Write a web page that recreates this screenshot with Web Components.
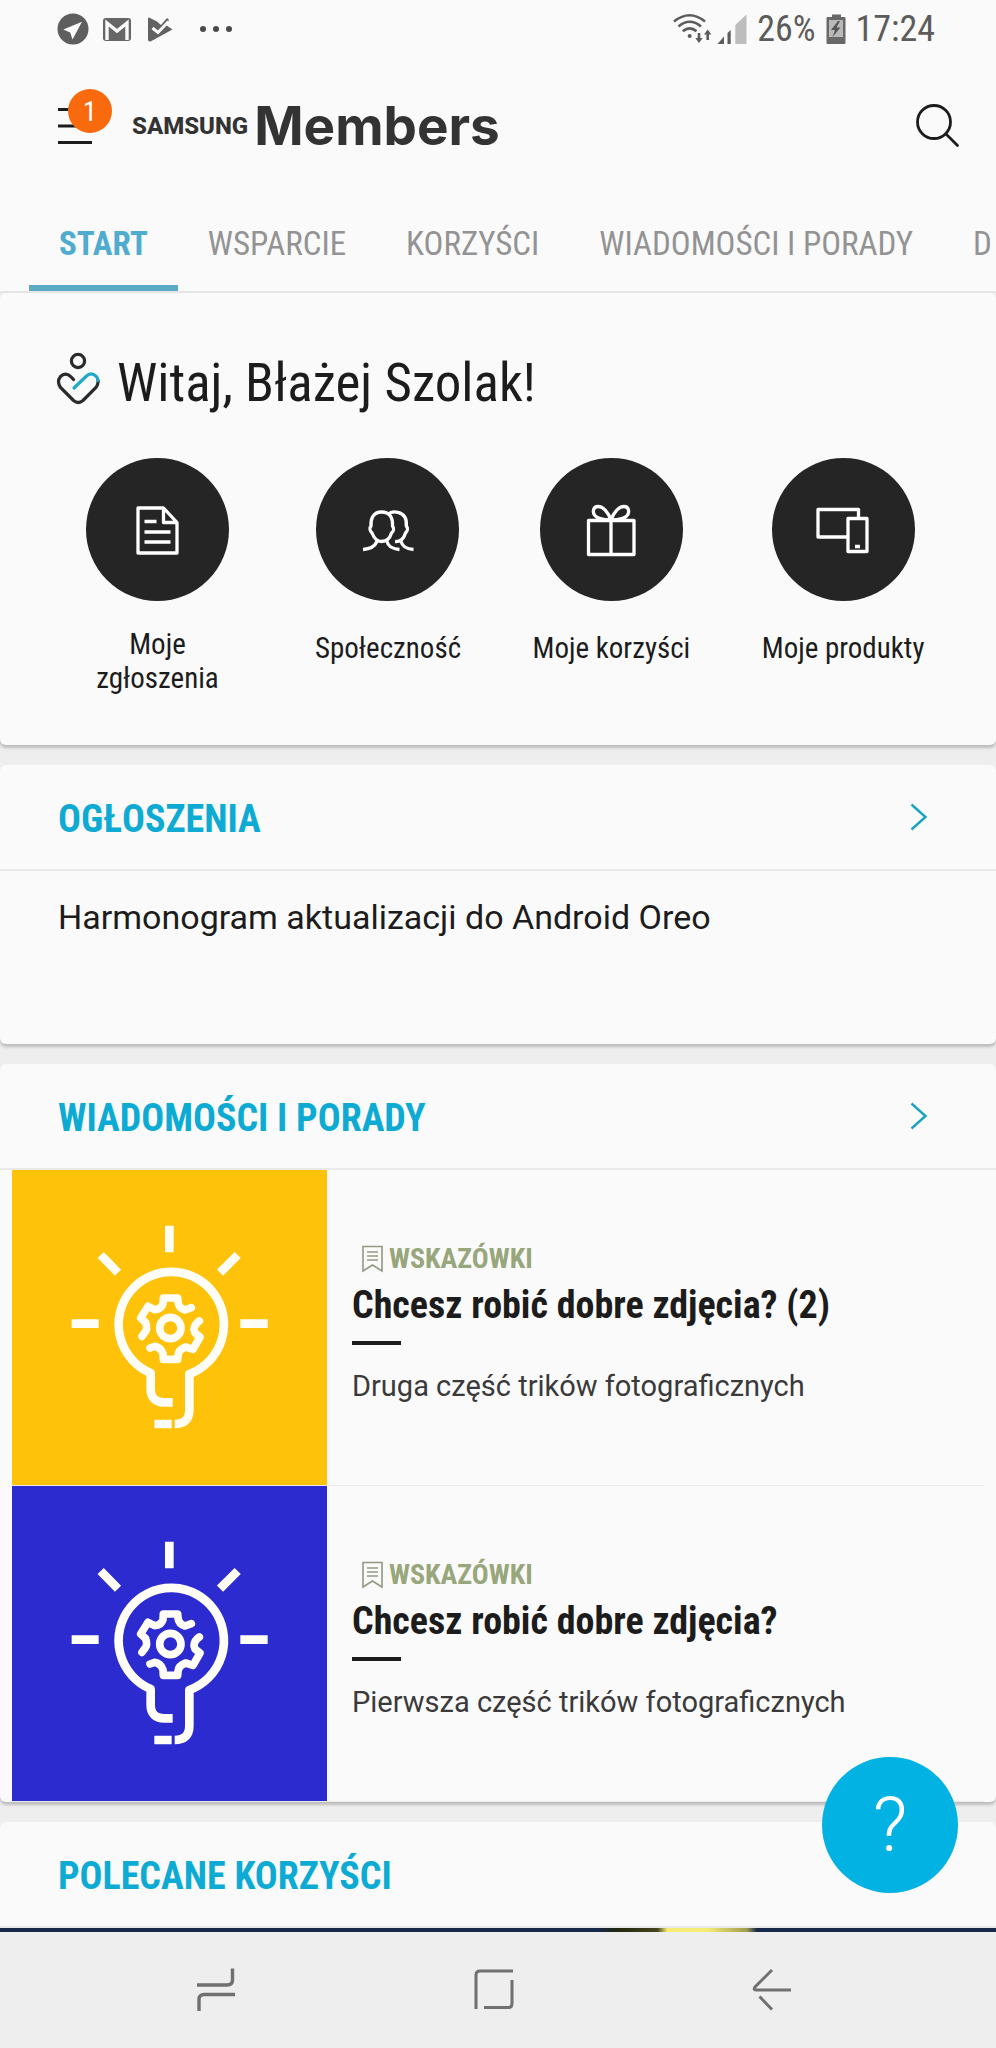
<!DOCTYPE html>
<html lang="pl">
<head>
<meta charset="utf-8">
<meta name="viewport" content="width=device-width, initial-scale=1">
<title>Samsung Members</title>
<style>
  html, body { margin: 0; height: 100%; }
  body {
    background: #eeeeee;
    color: #1c1c1c;
    font-family: "Roboto Condensed", Roboto, "Liberation Sans", sans-serif;
    --surface: #fafafa;
    --line: #e9e9e9;
    --accent: #0dabd4;
    --ink: #1c1c1c;
    --edge: 58px;
  }
</style>
</head>
<body>
<members-app>
  <status-bar slot="top"></status-bar>
  <app-header slot="top"></app-header>
  <tab-strip slot="top">
    <tab-link active>START</tab-link>
    <tab-link>WSPARCIE</tab-link>
    <tab-link>KORZYŚCI</tab-link>
    <tab-link>WIADOMOŚCI I PORADY</tab-link>
    <tab-link>D</tab-link>
  </tab-strip>

  <welcome-card>
    <span slot="greeting">Witaj, Błażej Szolak!</span>
    <quick-action icon="document">Moje zgłoszenia</quick-action>
    <quick-action icon="people">Społeczność</quick-action>
    <quick-action icon="gift">Moje korzyści</quick-action>
    <quick-action icon="devices">Moje produkty</quick-action>
  </welcome-card>

  <section-card heading="OGŁOSZENIA" more>
    <notice-item>Harmonogram aktualizacji do Android Oreo</notice-item>
  </section-card>

  <section-card heading="WIADOMOŚCI I PORADY" more>
    <news-item style="--tile: #fec20a">
      <span slot="tag">WSKAZÓWKI</span>
      <span slot="title">Chcesz robić dobre zdjęcia? (2)</span>
      <span slot="text">Druga część trików fotograficznych</span>
    </news-item>
    <news-item style="--tile: #2c2bd0">
      <span slot="tag">WSKAZÓWKI</span>
      <span slot="title">Chcesz robić dobre zdjęcia?</span>
      <span slot="text">Pierwsza część trików fotograficznych</span>
    </news-item>
  </section-card>

  <section-card heading="POLECANE KORZYŚCI">
    <promo-banner></promo-banner>
  </section-card>

  <help-button slot="overlay">?</help-button>
  <system-nav slot="bottom"></system-nav>
</members-app>

<script>
const component = (name, html, setup) => {
  const template = document.createElement('template');
  template.innerHTML = html;
  customElements.define(name, class extends HTMLElement {
    constructor() {
      super();
      this.attachShadow({ mode: 'open' }).append(template.content.cloneNode(true));
    }
    connectedCallback() {
      if (setup) setup(this, this.shadowRoot);
    }
  });
};

component('members-app', `
  <style>
    :host { display: flex; flex-direction: column; height: 100vh; }
    header, footer { flex: none; }
    main { position: relative; flex: 1 1 0; min-height: 0; overflow: hidden; }
    .feed { display: flex; flex-direction: column; gap: 20px; }
  </style>
  <header><slot name="top"></slot></header>
  <main>
    <div class="feed"><slot></slot></div>
    <slot name="overlay"></slot>
  </main>
  <footer><slot name="bottom"></slot></footer>
`);

component('status-bar', `
  <style>
    :host { display: flex; align-items: center; height: 58px; padding: 0 61px 0 57px; background: var(--surface); color: #5c5c5c; font-size: 36px; line-height: 42px; }
    svg { display: block; flex: none; }
    .left, .right { display: flex; align-items: center; }
    .left { flex: 1; gap: 14px; }
    .dots { margin-left: 12px; }
    .right { gap: 10px; }
    .signals { display: flex; gap: 4px; }
  </style>
  <div class="left">
    <svg width="32" height="32" viewBox="0 0 32 32"><circle cx="16" cy="16" r="15.5" fill="#5e5e5e"/><path d="M6.3 16.6 25 8.8 15.5 26.5 13.2 19.6Z" fill="#fafafa"/></svg>
    <svg width="28" height="32" viewBox="0 0 28 32"><rect y="5" width="28" height="23" rx="3" fill="#666"/><path d="M4 27V10L14 18 24 10V27" fill="none" stroke="#fafafa" stroke-width="3.4"/></svg>
    <svg width="28" height="32" viewBox="0 0 28 32"><path d="M4 4.500 L12 8.500 L16 12 L22 5 L24 7 L21 12 L27.500 16.500 L5.500 28.500 Q3 29 3 26.500 V5Z" fill="#626262"/><path d="M7.500 15 L13 19.500 L23.500 8.500" fill="none" stroke="#fafafa" stroke-width="3"/></svg>
    <svg class="dots" width="34" height="32" viewBox="0 0 34 32" fill="#4a4a4a"><circle cx="4" cy="16" r="3"/><circle cx="17" cy="16" r="3"/><circle cx="30" cy="16" r="3"/></svg>
  </div>
  <div class="right">
    <div class="signals">
      <svg width="40" height="32" viewBox="0 0 40 32" fill="none" stroke="#5c5c5c" stroke-width="2.600"><path d="M1 8.500Q16.700-4 32 8.500M5.500 13.500Q16.700 4 28 13.500M9.700 18.300Q16.700 12.500 23.500 18.300"/><circle cx="16.700" cy="23" r="2" fill="#5c5c5c" stroke="none"/><path d="M26 20v7M34.700 27v-7"/><path d="M22.300 25h7.400L26 30ZM31 21.500h7.400L34.700 16.500Z" fill="#5c5c5c" stroke="none"/></svg>
      <svg width="30" height="32" viewBox="0 0 30 32"><path d="M.5 31 7 23.500V31ZM10.500 20 13.700 17V31H10.500Z" fill="#5c5c5c"/><path d="M18.300 12 29.500 1.500V31H18.300Z" fill="#bdbdbd"/></svg>
    </div>
    <span>26%</span>
    <svg width="20" height="32" viewBox="0 0 20 32"><path d="M6 1.500h9V4h3.500Q19.500 4 19.500 5V30Q19.500 31 18.500 31H1.500Q.5 31 .5 30V5Q.5 4 1.500 4H6Z" fill="#686868"/><rect x="3" y="7" width="14" height="17" fill="#b9b9b9"/><path d="M12 8 5 17h4l-2.500 7L14.500 14.500H10.500L14 8Z" fill="#555"/></svg>
    <span>17:24</span>
  </div>
`);

component('app-header', `
  <style>
    :host { display: flex; align-items: center; height: 136px; padding: 0 36px 9px 57px; background: var(--surface); }
    button { position: relative; flex: none; padding: 0; border: 0; background: none; color: inherit; font: inherit; }
    svg { display: block; }
    .badge { position: absolute; left: 11px; top: -19px; width: 44px; height: 44px; border-radius: 50%; background: #f9690e; color: #fff; font-size: 28px; line-height: 46px; text-align: center; }
    h1 { flex: 1; display: flex; align-items: center; gap: 6px; margin: 0 0 0 39px; color: #333; }
    .maker { font: 800 24px/32px Roboto, "Liberation Sans", sans-serif; }
    .product { font: 700 53px/64px Inter, "Liberation Sans", sans-serif; }
  </style>
  <button aria-label="Menu">
    <svg width="36" height="36" viewBox="0 0 36 36" stroke="#1c1c1c" stroke-width="3"><path d="M1 1.500H35M1 18H35M1 34.500H35"/></svg>
    <span class="badge">1</span>
  </button>
  <h1><span class="maker">SAMSUNG</span><span class="product">Members</span></h1>
  <button aria-label="Szukaj">
    <svg width="44" height="44" viewBox="0 0 44 44" fill="none" stroke="#1c1c1c" stroke-width="2.800" stroke-linecap="round"><circle cx="18" cy="18" r="16.500"/><path d="M30 30 41.500 41.500"/></svg>
  </button>
`);

component('tab-strip', `
  <style>
    :host { display: block; background: var(--surface); border-bottom: 2px solid #e5e5e5; overflow: hidden; }
    nav { display: flex; padding-left: 29px; }
  </style>
  <nav><slot></slot></nav>
`);

component('tab-link', `
  <style>
    :host { display: block; flex: none; color: #939393; font-size: 33px; }
    :host([active]) { color: #4fabcf; font-weight: 700; }
    a { display: block; padding: 0 30px; line-height: 82px; border-bottom: 6px solid transparent; color: inherit; text-decoration: none; white-space: nowrap; }
    :host([active]) a { border-color: #5aaac3; }
  </style>
  <a href="#"><slot></slot></a>
`);

component('welcome-card', `
  <style>
    :host { display: block; padding: 58px 0 50px; border-radius: 6px; background: var(--surface); box-shadow: 0 3px 3px #bdbdbd; }
    h2 { display: flex; align-items: center; gap: 15px; margin: 0 0 43px 56px; font-weight: 400; font-size: 53px; line-height: 64px; }
    svg { display: block; }
    .actions { display: flex; align-items: flex-start; justify-content: space-evenly; }
  </style>
  <h2>
    <svg width="46" height="62" viewBox="56 352 46 62" fill="none" stroke="#2a2a2a" stroke-width="3.200" stroke-linecap="round"><circle cx="78" cy="361" r="6.600"/><path d="M73.500 379.500 71 376.800Q65.500 371.500 60.500 376.500 56.500 381.500 60.500 387.500L73.500 400.500Q78.300 404.500 83 400.500L96 387.500Q98.500 384.500 98 380.500"/><path d="M74 388 86 376.500Q91 371.500 96 376.200 97.800 378 98 380.500" stroke="#1fa9c9"/></svg>
    <slot name="greeting"></slot>
  </h2>
  <div class="actions"><slot></slot></div>
`);

const actionIcons = {
  document: '<path d="M9 6H34.500L48 20.500V51H9ZM34.500 6V20.500H48M15.500 19.500H27.500M15.500 30H41.500M15.500 40H41.500"/>',
  people: '<path d="M21.500 10C13 10 10.500 17 11 24 9 26 10 29 12 31 14 36 17 39.500 21.500 39.500 27 39.500 30 36 31.500 31 34 29 34 26 32.500 24 33 16 30 10 21.500 10ZM3 47.500C10 47 15 44 17 39.500M27 39.500C28 44 33 47 39.500 47.500M28 12.500C31 9.500 35 9.500 38 10.300 45 12 47 17 46.300 24 48.300 26 47.500 29 45.500 31 44 36 41 40 35 39.700M41 39C42 44 47 47 53.500 47.500"/>',
  gift: '<path d="M5.500 18.500H51V52.500H5.500ZM28 18.500V52.500M28 18C25 10 20 4.500 15 4.500 10 4.500 9.500 10 11.500 13 14 17 20 17.500 28 18 36 17.500 42 17 44.500 13 46.500 10 46 4.500 41 4.500 36 4.500 31 10 28 18"/>',
  devices: '<path d="M33 35H3V7.500H43.500V16.500M33 16.500H52V49.500H33ZM40 44.500H45"/>'
};

component('quick-action', `
  <style>
    :host { display: block; max-width: 172px; }
    a { display: flex; flex-direction: column; align-items: center; gap: 26px; color: inherit; text-decoration: none; }
    .disc { display: grid; place-items: center; width: 143px; height: 143px; border-radius: 50%; background: #252525; }
    .label { display: flex; align-items: center; min-height: 42px; font-size: 29px; line-height: 34px; text-align: center; }
    svg { display: block; }
  </style>
  <a href="#">
    <span class="disc"><svg width="56" height="56" viewBox="0 0 56 56" fill="none" stroke="#fff" stroke-width="3.300" stroke-linejoin="round"></svg></span>
    <span class="label"><span><slot></slot></span></span>
  </a>
`, (host, root) => {
  root.querySelector('svg').innerHTML = actionIcons[host.getAttribute('icon')];
});

component('section-card', `
  <style>
    :host { display: block; border-radius: 6px; background: var(--surface); box-shadow: 0 3px 3px #bdbdbd; }
    header { display: flex; align-items: center; justify-content: space-between; height: 104px; padding: 0 68px 0 var(--edge); border-bottom: 2px solid var(--line); }
    h2 { margin: 0; padding-top: 4px; color: var(--accent); font-size: 38px; line-height: 44px; }
    a { display: none; }
    :host([more]) a { display: block; }
    svg { display: block; }
  </style>
  <header>
    <h2></h2>
    <a href="#" aria-label="Więcej"><svg width="18" height="28" viewBox="0 0 18 28" fill="none" stroke="#1aa3bd" stroke-width="2.400"><path d="M1.500 1.500 15.500 14 1.500 26.500"/></svg></a>
  </header>
  <slot></slot>
`, (host, root) => {
  root.querySelector('h2').textContent = host.getAttribute('heading');
});

component('notice-item', `
  <style>
    :host { display: block; padding: 24px var(--edge) 105px; font: 34px/44px Roboto, "Liberation Sans", sans-serif; }
    a { color: inherit; text-decoration: none; }
  </style>
  <a href="#"><slot></slot></a>
`);

component('news-item', `
  <style>
    :host { display: block; padding: 0 12px; }
    a { display: flex; gap: 25px; color: inherit; text-decoration: none; border-bottom: 1px solid var(--line); }
    svg { display: block; }
    .tile { flex: none; width: 315px; height: 315px; background: var(--tile); }
    .body { padding-top: 72px; }
    .tag { display: flex; align-items: center; gap: 6px; padding-left: 10px; color: #98a67c; font-weight: 700; font-size: 28px; line-height: 34px; }
    h3 { margin: 6px 0 13px; font-size: 38px; line-height: 46px; }
    .bar { width: 49px; height: 4px; background: var(--ink); }
    p { margin: 23px 0 0; color: #3a3a3a; font: 29px/36px Roboto, "Liberation Sans", sans-serif; }
  </style>
  <a href="#">
    <svg class="tile" viewBox="0 0 945 945" fill="none" stroke="#fffef6" stroke-width="26" stroke-linejoin="round">
      <g transform="translate(-37 -29)">
        <path d="M509 196V276M216 490H297M722 490H804M303 284 355 337M714 284 661 337"/>
        <path d="M519 726H494Q453 726 453 685V638A158 158 0 1 1 569 641V748Q569 791 525 791M464 791H516"/>
        <g stroke-width="23" stroke-linecap="round">
          <circle cx="512" cy="503" r="32"/>
          <path d="M575 442 556 449Q537 443 535 425L534 413H491L490 430Q485 447 465 448L445 438 423 473 438 487Q444 505 437 514L427 528"/>
          <path d="M599 482Q583 493 583 508L586 518 601 530 580 567 558 560Q537 567 535 585L534 597H491L490 580Q483 560 465 558L451 563"/>
        </g>
      </g>
    </svg>
    <div class="body">
      <div class="tag">
        <svg width="21" height="28" viewBox="0 0 21 28" fill="none" stroke="#929984" stroke-width="1.600"><path d="M1 1.500H20V26L10.500 20 1 26ZM5 7H16M5 11H16M5 15H16"/></svg>
        <slot name="tag"></slot>
      </div>
      <h3><slot name="title"></slot></h3>
      <div class="bar"></div>
      <p><slot name="text"></slot></p>
    </div>
  </a>
`);

component('promo-banner', `
  <style>
    :host { display: block; height: 240px; background: linear-gradient(90deg, #18294c 60%, #23280f 62%, #43461c 66%, #f5ec74 67%, #f5ec74 71%, #a09c50 75%, #18294c 76%); }
  </style>
`);

component('help-button', `
  <style>
    :host { display: block; position: absolute; right: 38px; bottom: 39px; }
    button { display: block; width: 136px; height: 136px; padding: 0; border: 0; border-radius: 50%; background: #02b2e3; color: #fff; font: 300 76px/136px Roboto, "Liberation Sans", sans-serif; }
  </style>
  <button aria-label="Pomoc"><slot></slot></button>
`);

component('system-nav', `
  <style>
    :host { display: block; background: #eeeeee; }
    nav { display: flex; height: 116px; padding: 0 85px 0 77px; }
    button { flex: 1; display: grid; place-items: center; padding: 0; border: 0; background: none; }
    svg { display: block; }
  </style>
  <nav>
    <button aria-label="Ostatnie"><svg width="44" height="44" viewBox="0 0 44 44" fill="none" stroke="#707070" stroke-width="3.400"><path d="M3 17H33Q38.500 17 38.500 12V.5M41 26.500H10Q5 26.500 5 31.500V43"/></svg></button>
    <button aria-label="Ekran główny"><svg width="44" height="44" viewBox="0 0 44 44" fill="none" stroke="#707070" stroke-width="3"><path d="M4 41V7Q4 3 8 3H41M12 39.500H36.500Q40 39.500 40 35.500V12"/></svg></button>
    <button aria-label="Wstecz"><svg width="44" height="44" viewBox="0 0 44 44" fill="none" stroke="#707070" stroke-width="3"><path d="M22 2 5 19Q3 22 6 22H41M9.500 28.500 22 41.500"/></svg></button>
  </nav>
`);
</script>
</body>
</html>
